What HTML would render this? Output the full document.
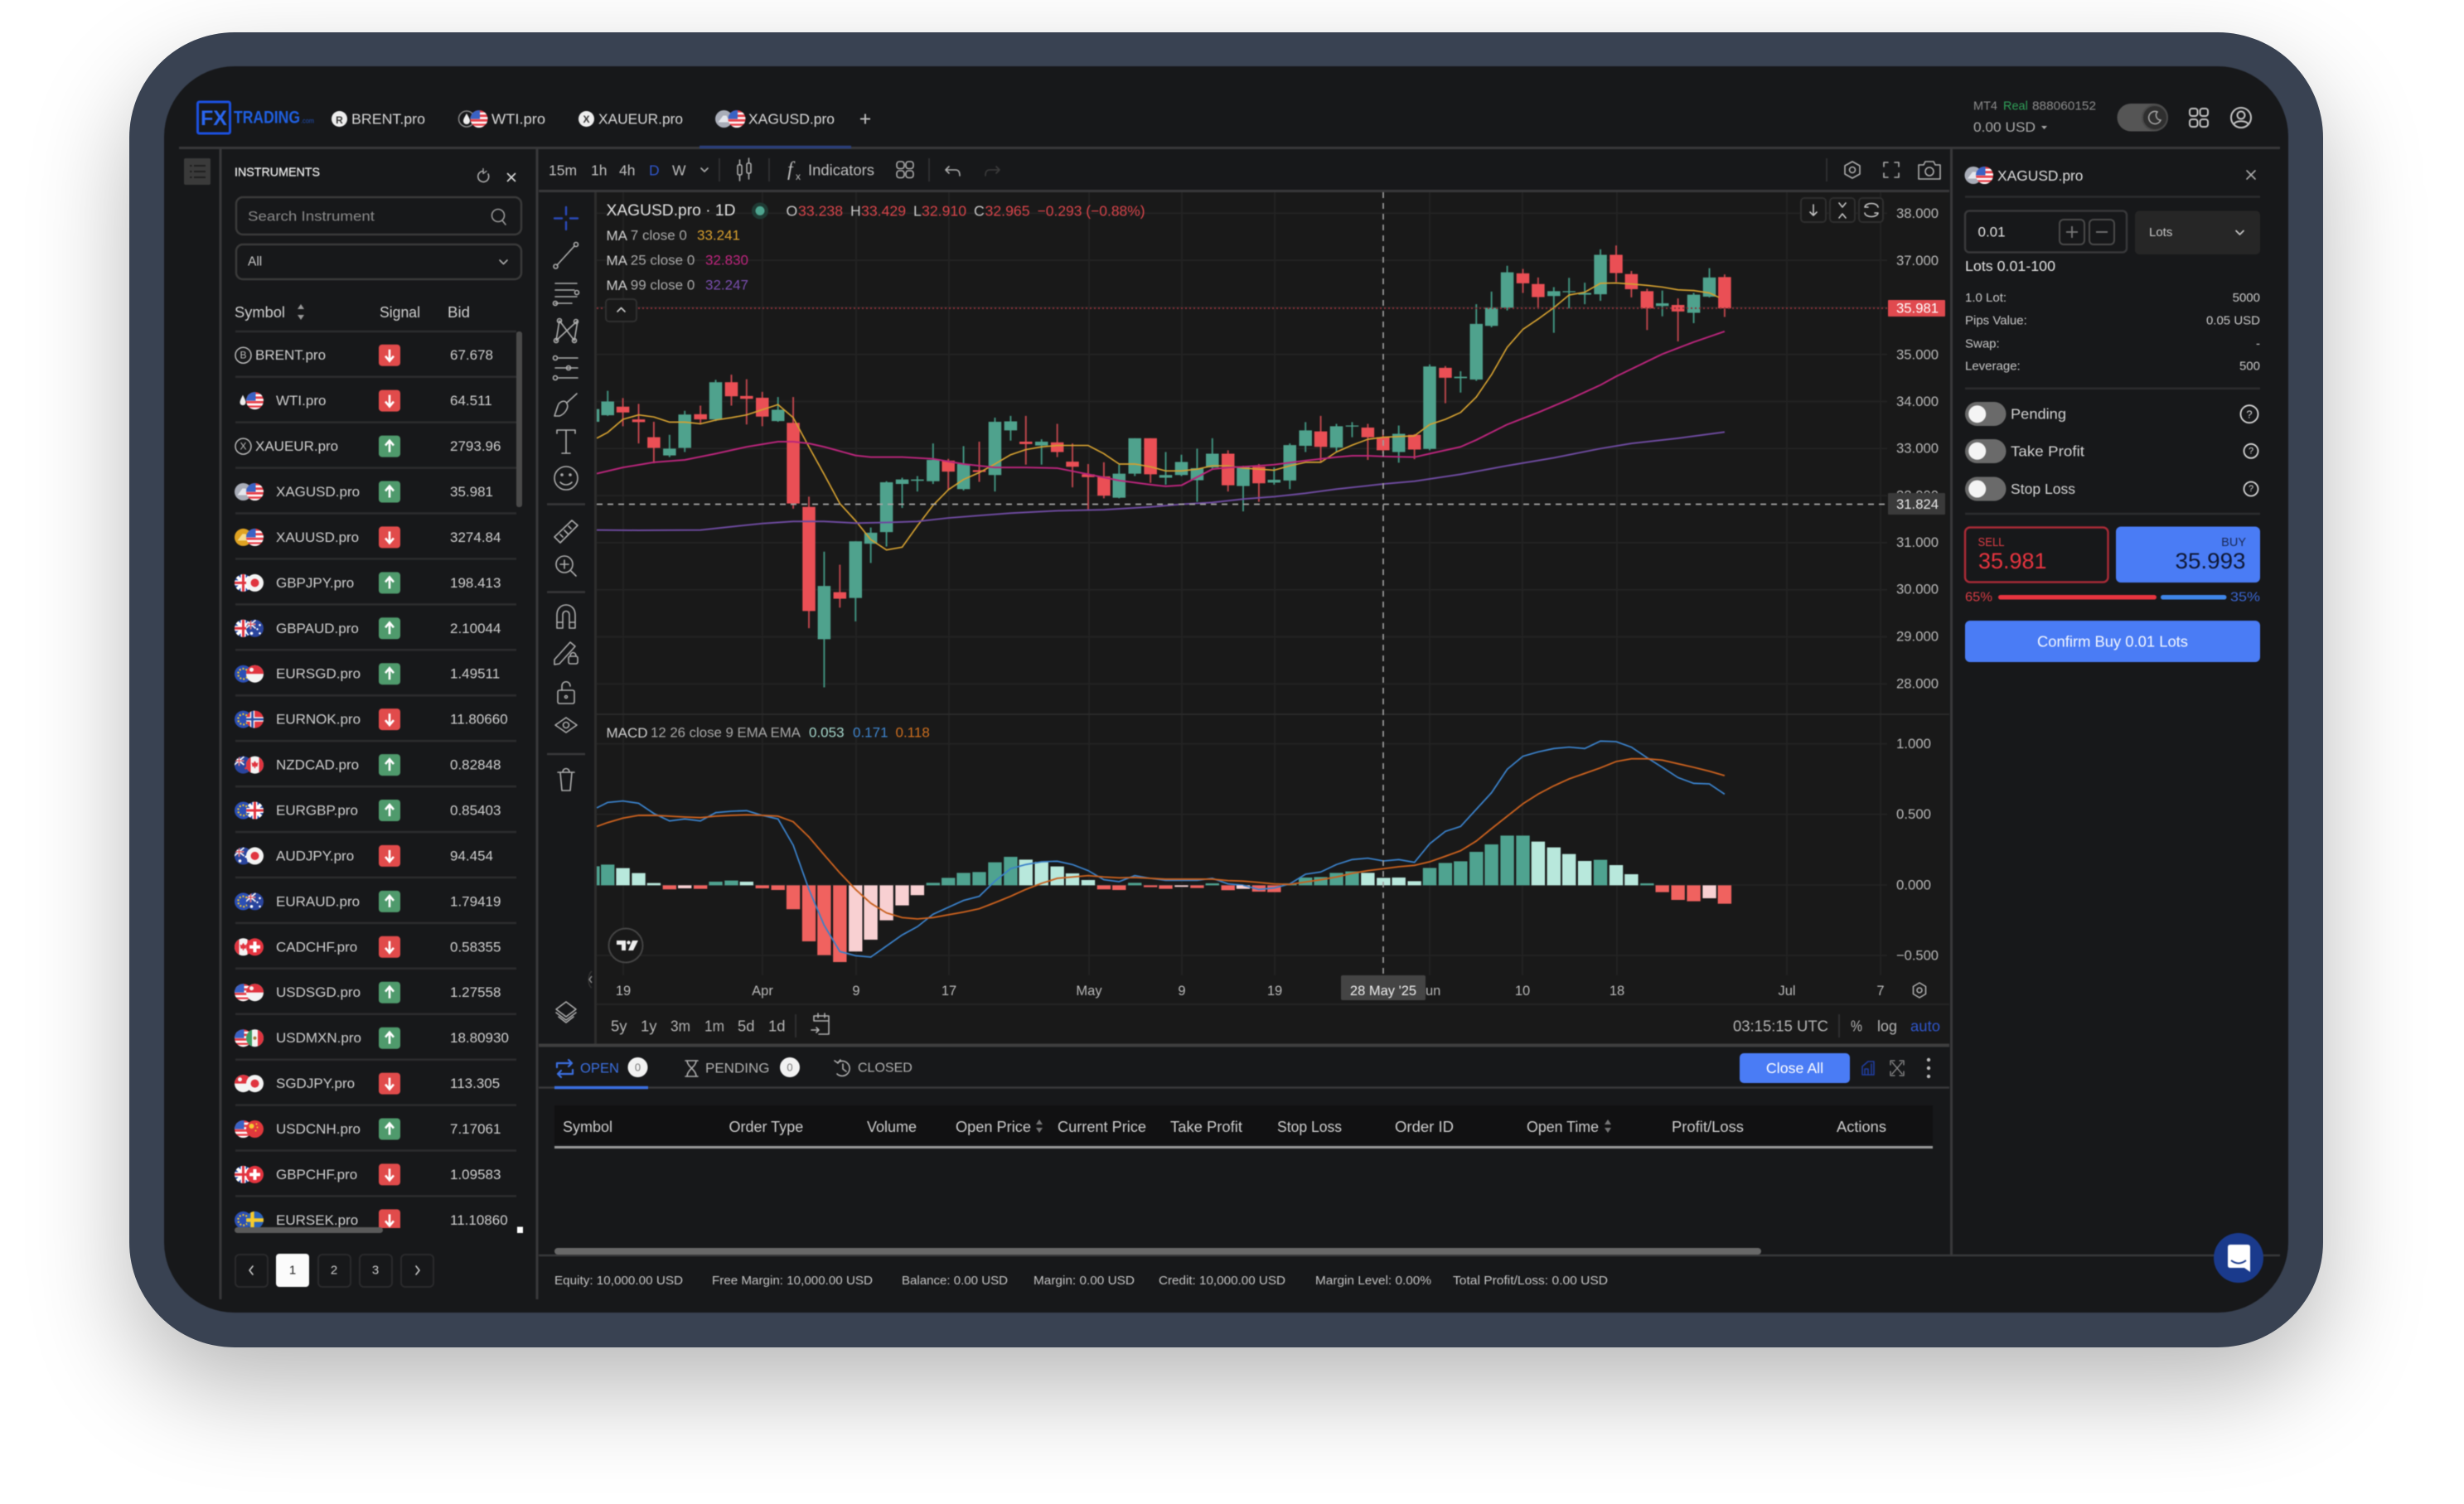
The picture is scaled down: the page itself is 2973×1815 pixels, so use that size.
<!DOCTYPE html>
<html><head><meta charset="utf-8"><title>FX Trading</title>
<style>
html,body{margin:0;padding:0;background:#fff;width:2973px;height:1815px;overflow:hidden}
#f{position:absolute;left:156px;top:39px;width:2647px;height:1587px;border-radius:127px;background:#394252;box-shadow:0 50px 120px rgba(0,0,0,.28)}
svg{position:absolute;left:0;top:0}
text{font-family:"Liberation Sans",sans-serif;dominant-baseline:central;fill:#c8c8c8}
.r{font-size:17px;fill:#cfcfcf}
.t{font-size:17.4px;fill:#d8d8d8}
.tb{font-size:17.5px;fill:#bdbdbd}
.ax{font-size:16.7px;fill:#b8b8b8}
.m{font-size:17px;fill:#a8a8a8}
.h{font-size:18px;fill:#cfcfcf}
.fo{font-size:15.2px;fill:#c4c4c4}
.d{font-size:15px;fill:#c8c8c8}
.tm{font-size:16.5px;fill:#b8b8b8;text-anchor:middle}
.b{font-size:18.5px;fill:#b4b4b4}
.red{fill:#d8444a}
.i{fill:none;stroke:#adadad;stroke-width:1.6;stroke-linecap:round;stroke-linejoin:round}
.dv{stroke:#2c2c2e;stroke-width:2.5;fill:none}
.ln{fill:none;stroke-linejoin:round}
</style></head><body>
<div id="f"></div>
<svg width="2973" height="1815" viewBox="0 0 2973 1815" xmlns="http://www.w3.org/2000/svg">
<defs>
<clipPath id="c"><circle r="10.5"/></clipPath>
<clipPath id="rows"><rect x="270" y="400" width="370" height="1082"/></clipPath>
<clipPath id="ch"><rect x="720" y="232" width="1632" height="950"/></clipPath>
<g id="us" clip-path="url(#c)"><rect x="-11" y="-11" width="22" height="22" fill="#e8404a"/><path d="M-11-6.5H11M-11-1H11M-11 4.5H11M-11 9.5H11" stroke="#fff" stroke-width="2.6"/><rect x="-11" y="-11" width="12" height="11" fill="#3a62c4"/></g>
<g id="gb" clip-path="url(#c)"><rect x="-11" y="-11" width="22" height="22" fill="#2d4fa8"/><path d="M-11-11L11 11M11-11L-11 11" stroke="#fff" stroke-width="4"/><path d="M-11 0H11M0-11V11" stroke="#fff" stroke-width="6"/><path d="M-11 0H11M0-11V11" stroke="#e0343f" stroke-width="3"/></g>
<g id="jp" clip-path="url(#c)"><rect x="-11" y="-11" width="22" height="22" fill="#f4f4f4"/><circle r="5" fill="#e0343f"/></g>
<g id="eu" clip-path="url(#c)"><rect x="-11" y="-11" width="22" height="22" fill="#2b4fb5"/><circle r="6.2" fill="none" stroke="#f2c82e" stroke-width="2.2" stroke-dasharray="2 2"/></g>
<g id="au" clip-path="url(#c)"><rect x="-11" y="-11" width="22" height="22" fill="#2a459e"/><path d="M-11-10L1 0M1-10L-11 0M-5-11V1M-11-5H1" stroke="#f2f2f2" stroke-width="1.8"/><path d="M-11-5H1M-5-11V1" stroke="#e0343f" stroke-width="1"/><circle cx="-4" cy="6" r="1.8" fill="#fff"/><circle cx="6" cy="-4" r="1.3" fill="#fff"/><circle cx="6" cy="6" r="1.3" fill="#fff"/><circle cx="3" cy="1" r="1.2" fill="#fff"/></g>
<g id="sg" clip-path="url(#c)"><rect x="-11" y="-11" width="22" height="22" fill="#f4f4f4"/><rect x="-11" y="-11" width="22" height="11" fill="#e0343f"/><circle cx="-4" cy="-5" r="2.5" fill="#f4f4f4"/></g>
<g id="no" clip-path="url(#c)"><rect x="-11" y="-11" width="22" height="22" fill="#e0343f"/><path d="M-11 0H11M-3-11V11" stroke="#fff" stroke-width="5.4"/><path d="M-11 0H11M-3-11V11" stroke="#2b4fa5" stroke-width="2.6"/></g>
<g id="nz" clip-path="url(#c)"><rect x="-11" y="-11" width="22" height="22" fill="#2a459e"/><path d="M-11-10L1 0M1-10L-11 0M-5-11V1M-11-5H1" stroke="#f2f2f2" stroke-width="1.8"/><path d="M-11-5H1M-5-11V1" stroke="#e0343f" stroke-width="1"/><circle cx="5" cy="-3" r="1.4" fill="#e0343f"/><circle cx="3" cy="4" r="1.4" fill="#e0343f"/><circle cx="7" cy="3" r="1.4" fill="#e0343f"/></g>
<g id="ca" clip-path="url(#c)"><rect x="-11" y="-11" width="22" height="22" fill="#f4f4f4"/><rect x="-11" y="-11" width="6" height="22" fill="#e0343f"/><rect x="5" y="-11" width="6" height="22" fill="#e0343f"/><path d="M0-5L2-2L4-3L3 2H.7V4H-.7V2H-3L-4-3L-2-2Z" fill="#e0343f"/></g>
<g id="ch2" clip-path="url(#c)"><rect x="-11" y="-11" width="22" height="22" fill="#e5343f"/><path d="M-6.5 0H6.5M0-6.5V6.5" stroke="#fff" stroke-width="4"/></g>
<g id="mx" clip-path="url(#c)"><rect x="-11" y="-11" width="22" height="22" fill="#f2f2f2"/><rect x="-11" y="-11" width="7.5" height="22" fill="#3e9b62"/><rect x="3.5" y="-11" width="7.5" height="22" fill="#e0343f"/><circle r="2" fill="#a47c3a"/></g>
<g id="cn" clip-path="url(#c)"><rect x="-11" y="-11" width="22" height="22" fill="#e0383c"/><circle cx="-4" cy="-3.5" r="3" fill="#f4cc30"/><circle cx="2" cy="-6" r="1" fill="#f4cc30"/><circle cx="3" cy="-2" r="1" fill="#f4cc30"/><circle cx="1" cy="2" r="1" fill="#f4cc30"/></g>
<g id="se" clip-path="url(#c)"><rect x="-11" y="-11" width="22" height="22" fill="#2a62b8"/><path d="M-11 0H11M-3-11V11" stroke="#f6cb2c" stroke-width="4.4"/></g>
<g id="si" clip-path="url(#c)"><rect x="-11" y="-11" width="22" height="22" fill="#a9adb8"/><path d="M-7 4L-1-4H3L7 4Z" fill="#e4e6ec"/></g>
<g id="go" clip-path="url(#c)"><rect x="-11" y="-11" width="22" height="22" fill="#e0a322"/><path d="M-7 4L-1-4H3L7 4Z" fill="#f6dd90"/></g>
<g id="dn"><rect x="-13" y="-13" width="26" height="26" rx="4" fill="#e14b4b"/><path d="M0-7V6M-5 1L0 7L5 1" stroke="#fff" stroke-width="2.6" fill="none"/></g>
<g id="up"><rect x="-13" y="-13" width="26" height="26" rx="4" fill="#4f9a6c"/><path d="M0 7V-6M-5-1L0-7L5-1" stroke="#fff" stroke-width="2.6" fill="none"/></g>
</defs>

<g style="filter:blur(.6px)">
<rect x="198" y="80" width="2563" height="1504" rx="85" fill="#17181a"/>

<!-- logo -->
<rect x="238.5" y="123" width="39" height="38" rx="2" fill="none" stroke="#1b50e0" stroke-width="3"/>
<text x="242" y="143" font-size="25" font-weight="700" textLength="32" lengthAdjust="spacingAndGlyphs" style="fill:#2a66ee">FX</text>
<text x="282" y="142" font-size="21" textLength="80" lengthAdjust="spacingAndGlyphs" style="fill:#1f5fe0;font-weight:700">TRADING</text>
<text x="363" y="146" font-size="8" textLength="16" lengthAdjust="spacingAndGlyphs" style="fill:#1f4fb8">.com</text>

<!-- tabs -->
<circle cx="409.5" cy="143.5" r="9.5" fill="#eee"/><text x="409.5" y="145" font-size="12" text-anchor="middle" font-weight="700" style="fill:#333">R</text>
<text x="424" y="143.5" class="t" textLength="89" lengthAdjust="spacingAndGlyphs">BRENT.pro</text>
<circle cx="563" cy="143.5" r="9.5" fill="#17181a" stroke="#888" stroke-width="1.5"/><path d="M563 137C560 142 559 144 559 146A4 4 0 0 0 567 146C567 144 566 142 563 137Z" fill="#eee"/>
<use href="#us" x="578" y="143.5"/>
<text x="593" y="143.5" class="t" textLength="65" lengthAdjust="spacingAndGlyphs">WTI.pro</text>
<circle cx="707.5" cy="143.5" r="9.5" fill="#eee"/><text x="707.5" y="144" font-size="12" text-anchor="middle" font-weight="700" style="fill:#333">X</text>
<text x="722" y="143.5" class="t" textLength="102" lengthAdjust="spacingAndGlyphs">XAUEUR.pro</text>
<use href="#si" x="873.5" y="143.5"/><use href="#us" x="889" y="143.5"/>
<text x="903" y="143.5" class="t" textLength="104" lengthAdjust="spacingAndGlyphs">XAGUSD.pro</text>
<path d="M1038 143.5H1050M1044 137.5V149.5" stroke="#bbb" stroke-width="2"/>

<!-- main dividers -->
<path d="M216 178.5H2751" stroke="#38383a" stroke-width="3"/>
<path d="M844 177.5H1027" stroke="#2a3f7a" stroke-width="3.5"/>
<path d="M266 180V1568M648 180V1568" stroke="#38383a" stroke-width="3"/>
<path d="M2354.5 180V1515" stroke="#38383a" stroke-width="3"/>

<!-- account -->
<text x="2381" y="128.5" font-size="14.5" style="fill:#8c8c8c">MT4</text>
<text x="2417" y="128.5" font-size="14.5" style="fill:#2f9e58">Real</text>
<text x="2452" y="128.5" font-size="14.5" textLength="77" lengthAdjust="spacingAndGlyphs" style="fill:#8c8c8c">888060152</text>
<text x="2381" y="153.7" font-size="17" style="fill:#a8a8a8" textLength="75" lengthAdjust="spacingAndGlyphs">0.00 USD</text>
<path d="M2463 152H2470L2466.5 156Z" fill="#aaa"/>
<rect x="2554.5" y="125" width="61.5" height="33.5" rx="16.7" fill="#555"/>
<circle cx="2600" cy="142" r="15" fill="#2f2f2f" stroke="#4a4a4a" stroke-width="2"/>
<path d="M2603 135A7.5 7.5 0 1 0 2607 145A6 6 0 0 1 2603 135Z" fill="none" stroke="#aaa" stroke-width="1.5"/>
<g class="i" style="stroke:#c4c4c4;stroke-width:2"><rect x="2642" y="131" width="9.5" height="9" rx="3"/><rect x="2654.5" y="131" width="9.5" height="9" rx="3"/><rect x="2642" y="144" width="9.5" height="9" rx="3"/><rect x="2654.5" y="144" width="9.5" height="9" rx="3"/>
<circle cx="2704" cy="142" r="12"/><circle cx="2704" cy="139" r="4.5"/><path d="M2695 150C2698 145 2710 145 2713 150"/></g>

<!-- sidebar strip -->
<rect x="222" y="191" width="32" height="32" rx="2" fill="#3a3a3a"/>
<path d="M234 200H248M234 207H248M234 214H248" stroke="#1e1e1e" stroke-width="2"/><path d="M229 200H231.5M229 207H231.5M229 214H231.5" stroke="#1e1e1e" stroke-width="2"/>

<!-- instruments -->
<text x="283" y="208.5" font-size="14.7" textLength="103" lengthAdjust="spacingAndGlyphs" style="fill:#ececec;stroke:#ececec;stroke-width:.25">INSTRUMENTS</text>
<path d="M589 210A6.5 6.5 0 1 1 583 206.5" class="i"/><path d="M583 203.5V209.5L587 206.5" class="i" style="stroke-width:1.3"/>
<path d="M612.5 209.5L621.5 218.5M621.5 209.5L612.5 218.5" class="i" style="stroke:#ddd"/>
<rect x="285" y="238" width="344" height="45" rx="8" fill="none" stroke="#3a3a3a" stroke-width="2.5"/>
<text x="299" y="261" font-size="17" textLength="153" lengthAdjust="spacingAndGlyphs" style="fill:#8a8a8a">Search Instrument</text>
<circle cx="601" cy="260" r="7.5" class="i" style="stroke:#999;stroke-width:1.6"/><path d="M606 266L610 271" class="i" style="stroke:#999;stroke-width:1.6"/>
<rect x="285" y="295" width="344" height="42" rx="8" fill="none" stroke="#3a3a3a" stroke-width="2.5"/>
<text x="299" y="316" font-size="15.5" style="fill:#c8c8c8">All</text>
<path d="M603 314L607.5 318.5L612 314" class="i"/>
<text x="283" y="377" font-size="18" textLength="61" lengthAdjust="spacingAndGlyphs" style="fill:#d0d0d0">Symbol</text>
<path d="M363 367L367 373H359ZM363 386L367 380H359Z" fill="#999"/>
<text x="458" y="377" font-size="18" textLength="49" lengthAdjust="spacingAndGlyphs" style="fill:#d0d0d0">Signal</text>
<text x="540" y="377" font-size="18" textLength="27" lengthAdjust="spacingAndGlyphs" style="fill:#d0d0d0">Bid</text>
<path d="M284 400H623" class="dv"/>
<rect x="623" y="400" width="7" height="212" rx="3" fill="#4a4a4a"/>

<g clip-path="url(#rows)">
<g transform="translate(0,428.7)"><circle cx="293.5" cy="0" r="9.5" fill="none" stroke="#bbb" stroke-width="1.5"/><text x="293.5" y="0" font-size="12" text-anchor="middle" style="fill:#bbb">B</text><text x="308" class="r">BRENT.pro</text><use href="#dn" x="470"/><text x="543" class="r">67.678</text><path d="M284 26H623" class="dv"/></g>
<g transform="translate(0,483.6)"><path d="M293 -7C290.5 -2 289.5 0 289.5 2A3.5 3.5 0 0 0 296.5 2C296.5 0 295.5 -2 293 -7Z" fill="#eee"/><use href="#us" x="307.5"/><text x="333" class="r">WTI.pro</text><use href="#dn" x="470"/><text x="543" class="r">64.511</text><path d="M284 26H623" class="dv"/></g>
<g transform="translate(0,538.6)"><circle cx="293.5" cy="0" r="9.5" fill="none" stroke="#bbb" stroke-width="1.5"/><text x="293.5" y="0" font-size="12" text-anchor="middle" style="fill:#bbb">X</text><text x="308" class="r">XAUEUR.pro</text><use href="#up" x="470"/><text x="543" class="r">2793.96</text><path d="M284 26H623" class="dv"/></g>
<g transform="translate(0,593.5)"><use href="#si" x="293.5"/><use href="#us" x="307.5"/><text x="333" class="r">XAGUSD.pro</text><use href="#up" x="470"/><text x="543" class="r">35.981</text><path d="M284 26H623" class="dv"/></g>
<g transform="translate(0,648.4)"><use href="#go" x="293.5"/><use href="#us" x="307.5"/><text x="333" class="r">XAUUSD.pro</text><use href="#dn" x="470"/><text x="543" class="r">3274.84</text><path d="M284 26H623" class="dv"/></g>
<g transform="translate(0,703.4)"><use href="#gb" x="293.5"/><use href="#jp" x="307.5"/><text x="333" class="r">GBPJPY.pro</text><use href="#up" x="470"/><text x="543" class="r">198.413</text><path d="M284 26H623" class="dv"/></g>
<g transform="translate(0,758.3)"><use href="#gb" x="293.5"/><use href="#au" x="307.5"/><text x="333" class="r">GBPAUD.pro</text><use href="#up" x="470"/><text x="543" class="r">2.10044</text><path d="M284 26H623" class="dv"/></g>
<g transform="translate(0,813.2)"><use href="#eu" x="293.5"/><use href="#sg" x="307.5"/><text x="333" class="r">EURSGD.pro</text><use href="#up" x="470"/><text x="543" class="r">1.49511</text><path d="M284 26H623" class="dv"/></g>
<g transform="translate(0,868.1)"><use href="#eu" x="293.5"/><use href="#no" x="307.5"/><text x="333" class="r">EURNOK.pro</text><use href="#dn" x="470"/><text x="543" class="r">11.80660</text><path d="M284 26H623" class="dv"/></g>
<g transform="translate(0,923.1)"><use href="#nz" x="293.5"/><use href="#ca" x="307.5"/><text x="333" class="r">NZDCAD.pro</text><use href="#up" x="470"/><text x="543" class="r">0.82848</text><path d="M284 26H623" class="dv"/></g>
<g transform="translate(0,978)"><use href="#eu" x="293.5"/><use href="#gb" x="307.5"/><text x="333" class="r">EURGBP.pro</text><use href="#up" x="470"/><text x="543" class="r">0.85403</text><path d="M284 26H623" class="dv"/></g>
<g transform="translate(0,1032.9)"><use href="#au" x="293.5"/><use href="#jp" x="307.5"/><text x="333" class="r">AUDJPY.pro</text><use href="#dn" x="470"/><text x="543" class="r">94.454</text><path d="M284 26H623" class="dv"/></g>
<g transform="translate(0,1087.9)"><use href="#eu" x="293.5"/><use href="#au" x="307.5"/><text x="333" class="r">EURAUD.pro</text><use href="#up" x="470"/><text x="543" class="r">1.79419</text><path d="M284 26H623" class="dv"/></g>
<g transform="translate(0,1142.8)"><use href="#ca" x="293.5"/><use href="#ch2" x="307.5"/><text x="333" class="r">CADCHF.pro</text><use href="#dn" x="470"/><text x="543" class="r">0.58355</text><path d="M284 26H623" class="dv"/></g>
<g transform="translate(0,1197.7)"><use href="#us" x="293.5"/><use href="#sg" x="307.5"/><text x="333" class="r">USDSGD.pro</text><use href="#up" x="470"/><text x="543" class="r">1.27558</text><path d="M284 26H623" class="dv"/></g>
<g transform="translate(0,1252.7)"><use href="#us" x="293.5"/><use href="#mx" x="307.5"/><text x="333" class="r">USDMXN.pro</text><use href="#up" x="470"/><text x="543" class="r">18.80930</text><path d="M284 26H623" class="dv"/></g>
<g transform="translate(0,1307.6)"><use href="#sg" x="293.5"/><use href="#jp" x="307.5"/><text x="333" class="r">SGDJPY.pro</text><use href="#dn" x="470"/><text x="543" class="r">113.305</text><path d="M284 26H623" class="dv"/></g>
<g transform="translate(0,1362.5)"><use href="#us" x="293.5"/><use href="#cn" x="307.5"/><text x="333" class="r">USDCNH.pro</text><use href="#up" x="470"/><text x="543" class="r">7.17061</text><path d="M284 26H623" class="dv"/></g>
<g transform="translate(0,1417.4)"><use href="#gb" x="293.5"/><use href="#ch2" x="307.5"/><text x="333" class="r">GBPCHF.pro</text><use href="#dn" x="470"/><text x="543" class="r">1.09583</text><path d="M284 26H623" class="dv"/></g>
<g transform="translate(0,1472.4)"><use href="#eu" x="293.5"/><use href="#se" x="307.5"/><text x="333" class="r">EURSEK.pro</text><use href="#dn" x="470"/><text x="543" class="r">11.10860</text></g>
</g>
<rect x="283" y="1481" width="179" height="7" rx="3.5" fill="#5a5a5a"/>
<rect x="624" y="1480.5" width="7" height="7.5" fill="#fff"/>

<!-- pagination -->
<g fill="none" stroke="#2a2a2c" stroke-width="2"><rect x="284" y="1514" width="39" height="39" rx="5"/><rect x="384" y="1514" width="39" height="39" rx="5"/><rect x="434" y="1514" width="39" height="39" rx="5"/><rect x="484" y="1514" width="39" height="39" rx="5"/></g>
<rect x="333" y="1513" width="40" height="40" rx="4" fill="#fbfbfb"/>
<path d="M305 1528L301 1533L305 1538" class="i" style="stroke:#ccc"/><path d="M502 1528L506 1533L502 1538" class="i" style="stroke:#ccc"/>
<text x="353" y="1533" font-size="15" text-anchor="middle" style="fill:#222">1</text>
<text x="403" y="1533" font-size="15" text-anchor="middle" style="fill:#ccc">2</text>
<text x="453" y="1533" font-size="15" text-anchor="middle" style="fill:#ccc">3</text>

<!-- chart toolbar -->
<text x="662" y="205.5" class="tb">15m</text><text x="713" y="205.5" class="tb">1h</text><text x="747" y="205.5" class="tb">4h</text><text x="783" y="205.5" class="tb" style="fill:#2f55c8">D</text><text x="811" y="205.5" class="tb">W</text>
<path d="M846 203L850 207L854 203" class="i"/>
<path d="M868 191V219M928 191V219M1121 191V219M2204 191V219" stroke="#2e2e30" stroke-width="2"/>
<g class="i"><rect x="890" y="199" width="5" height="12" rx="1.5"/><path d="M892.5 193V199M892.5 211V218"/><rect x="901" y="197" width="5" height="12" rx="1.5"/><path d="M903.5 191V197M903.5 209V216"/></g>
<text x="950" y="205" font-size="24" font-style="italic" style="fill:#bdbdbd;font-family:'Liberation Serif',serif">f</text><text x="960" y="213" font-size="12" style="fill:#bdbdbd">x</text>
<text x="975" y="205.5" font-size="18" textLength="80" lengthAdjust="spacingAndGlyphs" style="fill:#bdbdbd">Indicators</text>
<g class="i"><rect x="1082" y="195" width="9" height="8.5" rx="3"/><rect x="1093" y="195" width="9" height="8.5" rx="3"/><rect x="1082" y="206" width="9" height="8.5" rx="3"/><rect x="1093" y="206" width="9" height="8.5" rx="3"/>
<path d="M1145 201L1141 205L1145 209M1141 205H1153C1157 205 1158 208 1158 212"/></g>
<path d="M1202 201L1206 205L1202 209M1206 205H1194C1190 205 1189 208 1189 212" class="i" style="stroke:#3c3c3c"/>
<g class="i"><path d="M2235 195L2244 200V210L2235 215L2226 210V200Z"/><circle cx="2235" cy="205" r="3.5"/>
<path d="M2273 201V196H2278M2286 196H2291V201M2291 209V214H2286M2278 214H2273V209"/>
<path d="M2315 199H2321L2323 195H2333L2335 199H2341V216H2315Z"/><circle cx="2328" cy="207" r="5"/></g>
<path d="M650 230.5H2352" stroke="#38383a" stroke-width="3"/>

<!-- chart bg -->
<rect x="720" y="232" width="1632" height="1028" fill="#191919"/>
<path d="M718.5 232V1262" stroke="#2c2c2c" stroke-width="3"/>
<g stroke="#232323" stroke-width="1.8" fill="none">
<path d="M752 232V1177M920 232V1177M1033 232V1177M1145 232V1177M1314 232V1177M1426 232V1177M1538 232V1177M1725 232V1177M1837 232V1177M1951 232V1177M2156 232V1177M2269 232V1177"/>
<path d="M720 257.3H2277M720 314.1H2277M720 370.9H2277M720 427.7H2277M720 484.5H2277M720 541.3H2277M720 598.1H2277M720 654.9H2277M720 711.7H2277M720 768.5H2277M720 825.3H2277"/>
<path d="M720 897.7H2277M720 982.7H2277M720 1068H2277M720 1153H2277"/>
</g>
<path d="M720 862H2352" stroke="#2a2a2a" stroke-width="2"/>
<path d="M720 1212H2352" stroke="#232323" stroke-width="2.5"/>
<path d="M650 1261.5H2352" stroke="#3e3e3e" stroke-width="4"/>

<!-- candles -->
<g clip-path="url(#ch)">
<g transform="translate(650,220) scale(.574,.4146)" fill="none">
<path stroke="#3f8f7c" stroke-width="3.5" d="M145 607V680M275 735V800M307 665V785M372 575V695M503 625V697M600 1075V1470M666 1045V1278M698 1005V1108M731 870V1060M764 860V948M796 855V900M829 760V878M893 768V897M959 685V900M992 680V752M1057 748V822M1220 822V920M1253 745V855M1318 785V880M1351 793V855M1384 775V930M1416 745V835"/>
<path stroke="#b8444a" stroke-width="3.5" d="M177 628V710M210 645V760M242 697V818M340 650V705M405 560V650M437 573V705M470 610V710M535 625V950M568 915V1298M633 1113V1238M861 805V895M926 755V872M1024 680V822M1090 703V800M1122 760V888M1155 820V955M1188 815V920M1286 745V875M1449 780V900"/>
<path stroke="#4fa28d" stroke-width="27" d="M114 660V697M145 638V678M275 775V795M307 676V773M372 582V690M503 662V695M600 1175V1330M666 1045V1210M698 1020V1052M731 873V1018M764 865V878M796 865V869M829 808V870M893 820V893M959 697V852M992 696V722M1057 755V766M1220 848V918M1253 745V848M1318 852V860M1351 814V852M1384 832V867M1416 790V830"/>
<path stroke="#ea4f55" stroke-width="27" d="M177 653V670M210 690V698M242 742V773M340 675V690M405 582V623M437 622V630M470 627V682M535 700V935M568 945V1248M633 1193V1212M861 810V842M926 838V843M1024 755V762M1090 757V785M1122 813V828M1155 850V858M1188 856V912M1286 745V850M1449 790V882"/>
</g>
<g transform="translate(1500,220) scale(.574,.4146)" fill="none">
<path stroke="#3f8f7c" stroke-width="3.5" d="M0 825V958M65 830V880M98 760V893M131 698V785M196 703V785M229 698V742M327 708V816M392 530V780M457 550V612M490 355V578M522 318V422M555 243V373M653 305V438M685 278V367M718 292V355M751 195V345M881 315V390M947 322V410M980 250V335"/>
<path stroke="#b8444a" stroke-width="3.5" d="M33 820V930M163 680V815M262 703V808M294 720V790M360 733V806M425 535V643M588 252V322M620 277V365M784 184V290M816 258V335M849 310V430M914 338V463M1012 268V392"/>
<path stroke="#4fa28d" stroke-width="27" d="M0 826V884M65 866V874M98 765V868M131 722V767M196 710V772M229 708V711M327 732V785M392 536V776M457 566V570M490 412V574M522 365V418M555 262V365M653 317V331M685 317V320M718 322V327M751 211V326M881 352V360M947 327V380M980 277V333"/>
<path stroke="#ea4f55" stroke-width="27" d="M33 828V876M163 725V770M262 714V742M294 742V780M360 735V778M425 540V569M588 265V294M620 296V334M784 211V264M816 267V311M849 317V367M914 357V376M1012 276V367"/>
</g>
<!-- MAs -->
<g transform="translate(650,220) scale(.574,.4146)" class="ln">
<polyline vector-effect="non-scaling-stroke" stroke="#d4a030" stroke-width="1.7" fill="none" points="122,745 145,728 177,690 210,677 242,683 275,698 307,698 340,703 372,692 405,685 437,677 470,662 503,647 535,685 568,770 600,850 633,935 666,985 698,1040 731,1070 764,1062 796,1000 829,940 861,895 893,865 926,845 959,820 992,793 1024,778 1057,770 1090,766 1122,766 1155,766 1188,790 1220,820 1253,820 1286,828 1318,840 1351,840 1384,835 1416,825 1449,825 1481,832"/>
<polyline vector-effect="non-scaling-stroke" stroke="#b8257a" stroke-width="2" fill="none" points="122,848 177,830 242,815 307,808 372,790 437,770 503,755 535,755 568,760 600,770 666,795 698,800 764,800 829,805 893,820 959,830 1024,830 1090,832 1155,850 1220,868 1286,880 1318,885 1351,882 1416,835 1449,830 1481,828"/>
<polyline vector-effect="non-scaling-stroke" stroke="#6d4a9e" stroke-width="2" fill="none" points="122,1012 210,1013 340,1012 470,993 535,987 600,987 666,992 731,990 796,987 861,977 926,970 992,963 1090,956 1188,953 1286,945 1351,937 1416,932 1481,922"/>
</g>
<g transform="translate(1500,220) scale(.574,.4146)" class="ln">
<polyline vector-effect="non-scaling-stroke" stroke="#d4a030" stroke-width="1.7" fill="none" points="0,832 33,835 65,838 98,825 131,815 163,815 196,785 229,765 262,748 295,742 327,740 360,738 392,705 425,690 457,670 490,625 522,560 555,480 588,428 620,398 653,365 685,328 718,320 751,294 784,293 816,296 849,300 881,305 914,313 947,315 980,322 1000,335"/>
<polyline vector-effect="non-scaling-stroke" stroke="#b8257a" stroke-width="2" fill="none" points="0,828 65,822 131,810 196,800 229,796 262,796 295,798 360,800 392,790 457,770 490,750 555,705 620,670 685,632 751,590 784,565 881,500 947,465 1012,434"/>
<polyline vector-effect="non-scaling-stroke" stroke="#6d4a9e" stroke-width="2" fill="none" points="0,922 65,915 131,905 196,893 295,878 360,870 457,850 555,825 653,802 751,775 816,760 914,745 1012,727"/>
</g>
</g>

<!-- MACD -->
<g clip-path="url(#ch)">
<g transform="translate(650,860) scale(.574,.3333)" fill="none">
<path stroke="#4fa390" stroke-width="28.5" d="M114 625V556M145 625V550M372 625V612M405 625V608M829 625V616M861 625V598M893 625V580M926 625V577M959 625V542M992 625V522M1253 625V616M1416 625V618"/>
<path stroke="#b8e8dc" stroke-width="28.5" d="M177 625V563M210 625V581M242 625V617M437 625V612M1024 625V532M1057 625V540M1090 625V557M1122 625V582M1155 625V606"/>
<path stroke="#f0625f" stroke-width="28.5" d="M275 625V640M340 625V638M470 625V636M503 625V642M535 625V712M568 625V828M600 625V878M633 625V903M1188 625V640M1220 625V642M1286 625V632M1318 625V638M1384 625V635M1449 625V643"/>
<path stroke="#f8d0d2" stroke-width="28.5" d="M307 625V636M666 625V865M698 625V822M731 625V752M764 625V698M796 625V661M1351 625V631"/>
<polyline vector-effect="non-scaling-stroke" stroke="#3a80c8" stroke-width="1.8" points="122,345 145,325 177,320 210,328 242,365 275,392 307,385 340,392 372,362 405,357 437,355 470,372 503,385 535,480 568,640 600,770 633,865 666,880 698,885 731,845 764,805 796,775 829,730 861,705 893,680 926,665 959,610 992,565 1024,550 1057,540 1090,538 1122,550 1155,572 1188,605 1220,612 1253,590 1286,600 1318,607 1351,607 1384,607 1416,600 1449,620 1481,625"/>
<polyline vector-effect="non-scaling-stroke" stroke="#c8601e" stroke-width="1.9" points="122,412 145,398 177,382 210,372 242,372 275,375 307,378 340,380 372,375 405,372 437,370 470,372 503,375 535,395 568,450 600,515 633,580 666,640 698,690 731,725 764,742 796,747 829,742 861,732 893,722 926,710 959,688 992,665 1024,640 1057,618 1090,600 1122,595 1155,590 1188,595 1220,598 1253,597 1286,600 1318,603 1351,603 1384,603 1416,603 1449,608 1481,610"/>
</g>
<g transform="translate(1500,860) scale(.574,.3333)" fill="none">
<path stroke="#4fa390" stroke-width="28.5" d="M98 625V618M131 625V597M163 625V595M196 625V580M229 625V575M392 625V562M425 625V544M457 625V538M490 625V504M522 625V477M555 625V445M588 625V445M751 625V533M849 625V618"/>
<path stroke="#b8e8dc" stroke-width="28.5" d="M262 625V580M295 625V598M327 625V597M360 625V610M620 625V467M653 625V488M685 625V512M718 625V537M784 625V552M816 625V585"/>
<path stroke="#f0625f" stroke-width="28.5" d="M33 625V648M65 625V650M881 625V650M914 625V678M947 625V683M1012 625V692"/>
<path stroke="#f8d0d2" stroke-width="28.5" d="M0 625V638M980 625V672"/>
<polyline vector-effect="non-scaling-stroke" stroke="#3a80c8" stroke-width="1.8" points="0,625 33,640 65,635 98,620 131,585 163,577 196,550 229,532 262,527 295,537 327,532 360,542 392,475 425,430 457,412 490,350 522,290 555,205 588,158 620,142 653,130 685,125 718,130 751,103 784,105 816,125 849,163 881,198 914,235 947,256 980,258 1012,295"/>
<polyline vector-effect="non-scaling-stroke" stroke="#c8601e" stroke-width="1.9" points="0,610 33,615 65,620 98,622 131,613 163,605 196,595 229,582 262,572 295,565 327,558 360,553 392,540 425,520 457,500 490,465 522,420 555,375 588,330 620,295 653,265 685,240 718,220 751,200 784,177 816,167 849,167 881,172 914,185 947,198 980,212 1012,228"/>
</g>
</g>

<!-- price line + crosshair -->
<path d="M720 372H2278" stroke="#8a3038" stroke-width="2" stroke-dasharray="2 3"/>
<path d="M720 608.5H2278" stroke="#a8a8a8" stroke-width="1.7" stroke-dasharray="7 6"/>
<path d="M1669 232V1176" stroke="#a0a0a0" stroke-width="1.7" stroke-dasharray="7 6"/>

<!-- chart legend -->
<text x="731.5" y="254.4" font-size="19.2" style="fill:#e2e2e2" textLength="156" lengthAdjust="spacingAndGlyphs">XAGUSD.pro · 1D</text>
<circle cx="917" cy="254.4" r="10" fill="#1f3a33"/><circle cx="917" cy="254.4" r="5.5" fill="#4ea58f"/>
<text x="948.5" y="254.4" font-size="17.7">O</text><text x="963" y="254.4" font-size="17.7" class="red">33.238</text><text x="1026" y="254.4" font-size="17.7">H</text><text x="1039" y="254.4" font-size="17.7" class="red">33.429</text><text x="1102" y="254.4" font-size="17.7">L</text><text x="1112" y="254.4" font-size="17.7" class="red">32.910</text><text x="1175" y="254.4" font-size="17.7">C</text><text x="1188.5" y="254.4" font-size="17.7" class="red">32.965</text><text x="1251.6" y="254.4" font-size="17.7" class="red" textLength="130" lengthAdjust="spacingAndGlyphs">−0.293 (−0.88%)</text>
<text x="731.5" y="284" class="m"><tspan style="fill:#cfcfcf">MA</tspan> 7 close 0</text><text x="841" y="284" class="m" style="fill:#d9a02e">33.241</text>
<text x="731.5" y="314" class="m"><tspan style="fill:#cfcfcf">MA</tspan> 25 close 0</text><text x="851" y="314" class="m" style="fill:#c0257f">32.830</text>
<text x="731.5" y="344" class="m"><tspan style="fill:#cfcfcf">MA</tspan> 99 close 0</text><text x="851" y="344" class="m" style="fill:#7a4fb0">32.247</text>
<rect x="731" y="361" width="37" height="27" rx="4" fill="#191919" stroke="#303030" stroke-width="2"/><path d="M745 376L749.5 371.5L754 376" class="i" style="stroke:#ccc"/>
<g fill="#191919" stroke="#2e2e2e" stroke-width="2"><rect x="2173" y="239" width="30" height="29" rx="4"/><rect x="2208" y="239" width="30" height="29" rx="4"/><rect x="2243" y="239" width="29" height="29" rx="4"/></g>
<g class="i" style="stroke:#c4c4c4"><path d="M2188 247V260M2184 256L2188 260L2192 256"/><path d="M2219 245L2223 250L2227 245M2219 263L2223 258L2227 263"/><path d="M2250 250C2251 244 2265 244 2266 250M2250 257C2251 263 2265 263 2266 257M2250 250H2254M2262 257H2266"/></g>

<!-- price axis -->
<text x="2288" y="257.3" class="ax">38.000</text><text x="2288" y="314.5" class="ax">37.000</text><text x="2288" y="428" class="ax">35.000</text><text x="2288" y="484.5" class="ax">34.000</text><text x="2288" y="541" class="ax">33.000</text><text x="2288" y="598" class="ax">32.000</text><text x="2288" y="654.5" class="ax">31.000</text><text x="2288" y="711" class="ax">30.000</text><text x="2288" y="768" class="ax">29.000</text><text x="2288" y="825" class="ax">28.000</text>
<rect x="2278" y="362" width="69" height="20" rx="1" fill="#e04a4f"/><text x="2288" y="372" class="ax" style="fill:#fff">35.981</text>
<rect x="2278" y="595" width="69" height="26" rx="1" fill="#3a3a3a"/><text x="2288" y="608.5" class="ax" style="fill:#e8e8e8">31.824</text>
<text x="2288" y="897.7" class="ax" textLength="42" lengthAdjust="spacingAndGlyphs">1.000</text><text x="2288" y="982.7" class="ax" textLength="42" lengthAdjust="spacingAndGlyphs">0.500</text><text x="2288" y="1068" class="ax" textLength="42" lengthAdjust="spacingAndGlyphs">0.000</text><text x="2288" y="1153" class="ax" textLength="51" lengthAdjust="spacingAndGlyphs">−0.500</text>

<text x="731.5" y="884" class="m"><tspan style="fill:#cfcfcf">MACD</tspan></text><text x="785" y="884" class="m" textLength="181" lengthAdjust="spacingAndGlyphs">12 26 close 9 EMA EMA</text>
<text x="976" y="884" class="m" style="fill:#a6d8cc">0.053</text><text x="1029" y="884" class="m" style="fill:#3f86d0">0.171</text><text x="1080.5" y="884" class="m" style="fill:#d0701f">0.118</text>

<!-- TV logo -->
<circle cx="755" cy="1141" r="20.5" fill="#191919" stroke="#444" stroke-width="2"/>
<path d="M744 1135H755V1147H750V1140H744ZM763 1135H770L764 1147H758Z" fill="#eee"/><circle cx="758.5" cy="1137.5" r="2.2" fill="#eee"/>
<path d="M714 1172C709 1176 709 1190 714 1192" fill="none" stroke="#333" stroke-width="1.5"/><path d="M714 1178L711 1182L714 1186" fill="none" stroke="#888" stroke-width="1.5"/>

<!-- time axis -->
<text x="752" y="1196" class="tm">19</text><text x="920" y="1196" class="tm">Apr</text><text x="1033" y="1196" class="tm">9</text><text x="1145" y="1196" class="tm">17</text><text x="1314" y="1196" class="tm">May</text><text x="1426" y="1196" class="tm">9</text><text x="1538" y="1196" class="tm">19</text><text x="1725" y="1196" class="tm">Jun</text><text x="1837" y="1196" class="tm">10</text><text x="1951" y="1196" class="tm">18</text><text x="2156" y="1196" class="tm">Jul</text><text x="2269" y="1196" class="tm">7</text>
<rect x="1618" y="1177" width="102" height="30" rx="2" fill="#444"/><text x="1669" y="1196" class="tm" style="fill:#eee">28 May '25</text>
<path d="M2316 1186L2323.5 1190.5V1199.5L2316 1204L2308.5 1199.5V1190.5Z" class="i"/><circle cx="2316" cy="1195" r="3" class="i"/>

<!-- range bar -->
<text x="737" y="1238" class="b">5y</text><text x="773" y="1238" class="b">1y</text><text x="809" y="1238" class="b" textLength="24" lengthAdjust="spacingAndGlyphs">3m</text><text x="850" y="1238" class="b" textLength="24" lengthAdjust="spacingAndGlyphs">1m</text><text x="890" y="1238" class="b">5d</text><text x="927" y="1238" class="b">1d</text>
<path d="M960 1224V1252M2219 1224V1252" stroke="#2e2e30" stroke-width="2"/>
<path d="M982 1232V1226H1000V1248H988M982 1232H1000M987 1223V1228M995 1223V1228M979 1243H988M985 1240L988 1243L985 1246" class="i"/>
<text x="2091" y="1238" class="b" textLength="115" lengthAdjust="spacingAndGlyphs">03:15:15 UTC</text>
<text x="2233" y="1238" class="b" textLength="14" lengthAdjust="spacingAndGlyphs">%</text><text x="2265" y="1238" class="b" textLength="24" lengthAdjust="spacingAndGlyphs">log</text><text x="2305" y="1238" class="b" textLength="36" lengthAdjust="spacingAndGlyphs" style="fill:#2f55c8">auto</text>

<!-- tool column -->
<g class="i">
<path d="M683 250V259M683 268V277M669 263.5H678M688 263.5H697" style="stroke:#2a4ab8;stroke-width:2.4"/>
<path d="M672 320L693 297"/><circle cx="670.5" cy="321.5" r="2.5"/><circle cx="695" cy="295" r="2.5"/>
<path d="M670 342H696M670 350H693M670 358H696M670 366H690"/><circle cx="696" cy="353" r="2.5"/><circle cx="670" cy="366" r="2.5"/>
<path d="M671 411L675 387L693 411L697 387L671 411"/><circle cx="671" cy="411" r="2.5"/><circle cx="675" cy="387" r="2.5"/><circle cx="693" cy="411" r="2.5"/><circle cx="695" cy="388" r="2.5"/>
<path d="M674 432H697M670 444H697M674 456H697"/><circle cx="670" cy="432" r="2.5"/><circle cx="670" cy="456" r="2.5"/><circle cx="686" cy="444" r="2.5"/>
<path d="M669 502L673 490C675 484 682 482 684 487C687 492 681 500 675 502ZM684 486L696 475"/>
<path d="M672 523V519H694V523M683 519V547M678 547H688"/>
<circle cx="683" cy="577" r="14"/><circle cx="678" cy="573" r="1"/><circle cx="688" cy="573" r="1"/><path d="M676 582C680 586 686 586 690 582"/>
<path d="M669 648L690 628L697 634L676 655ZM676 645L679 648M681 640L685 644M686 635L689 638"/>
<circle cx="681" cy="681" r="10"/><path d="M681 676V686M676 681H686M689 689L695 695"/>
<path d="M672 758V742C672 726 694 726 694 742V758H687V742C687 736 679 736 679 742V758ZM672 751H679M687 751H694"/>
<path d="M669 796L688 775L694 780L675 801L669 802Z"/><rect x="686" y="792" width="11" height="9" rx="2"/><path d="M688 792C688 786 695 786 695 792"/>
<rect x="673" y="833" width="20" height="16" rx="2"/><path d="M678 833V828C678 821 688 821 688 828"/><circle cx="683" cy="841" r="1.5"/>
<path d="M670 875L683 866L696 875L683 884Z"/><circle cx="683" cy="875" r="3.5"/>
<path d="M673 932H693M676 932L678 954H688L690 932M679 932C679 926 687 926 687 932"/>
<path d="M683 1209L695 1218L683 1227L671 1218ZM671 1222L683 1231L695 1222M674 1227L683 1234L692 1227"/>
</g>
<path d="M660 608.5H706M660 714.5H706M660 910H706" stroke="#38383a" stroke-width="2.5"/>

<!-- positions tabs -->
<g class="i" style="stroke:#3b6fe0;stroke-width:2.2"><path d="M672 1288V1283H690M686 1279L690 1283L686 1287M691 1291V1296H673M677 1292L673 1296L677 1300"/></g>
<text x="700" y="1289" font-size="16.6" style="fill:#3b6fe0">OPEN</text>
<circle cx="769.5" cy="1288" r="12" fill="#f2f2f2"/><text x="769.5" y="1288" font-size="13" text-anchor="middle" style="fill:#777">0</text>
<path d="M827 1280H842M827 1299H842M829 1280C829 1287 840 1291 840 1299M840 1280C840 1287 829 1291 829 1299" class="i"/>
<text x="851" y="1289" font-size="17" style="fill:#b0b0b0">PENDING</text>
<circle cx="953" cy="1288" r="12" fill="#f2f2f2"/><text x="953" y="1288" font-size="13" text-anchor="middle" style="fill:#777">0</text>
<path d="M1011 1282A9 9 0 1 1 1010 1296M1007 1280L1011 1283L1014 1279M1017 1284V1290L1021 1293" class="i"/>
<text x="1035" y="1289" font-size="16" style="fill:#b0b0b0">CLOSED</text>
<path d="M650 1312.5H2352" stroke="#38383a" stroke-width="2.5"/>
<path d="M669 1312.5H782" stroke="#3b6fe0" stroke-width="3.5"/>
<rect x="2099" y="1271" width="133" height="36" rx="5" fill="#4a7cf5"/>
<text x="2165.5" y="1289" font-size="17.8" text-anchor="middle" style="fill:#fff">Close All</text>
<path d="M2247 1297V1287L2254 1281H2261V1297ZM2250 1297V1290H2254V1297M2258 1284V1297" class="i" style="stroke:#1f3c9e"/>
<path d="M2281 1285V1280H2286M2292 1280H2297V1285M2297 1293V1298H2292M2286 1298H2281V1293M2283 1282L2295 1296M2295 1282L2283 1296" class="i" style="stroke:#8f8f8f;stroke-width:1.3"/>
<circle cx="2327" cy="1279" r="2.2" fill="#bbb"/><circle cx="2327" cy="1289" r="2.2" fill="#bbb"/><circle cx="2327" cy="1299" r="2.2" fill="#bbb"/>

<!-- table header -->
<rect x="669" y="1334" width="1663" height="47" fill="#111112"/>
<rect x="669" y="1383" width="1663" height="3" fill="#9a9a9a"/>
<text x="679" y="1360" class="h">Symbol</text><text x="879.5" y="1360" class="h">Order Type</text><text x="1046" y="1360" class="h">Volume</text><text x="1153" y="1360" class="h" textLength="91" lengthAdjust="spacingAndGlyphs">Open Price</text><text x="1276" y="1360" class="h" textLength="107" lengthAdjust="spacingAndGlyphs">Current Price</text><text x="1412" y="1360" class="h" textLength="87" lengthAdjust="spacingAndGlyphs">Take Profit</text><text x="1541" y="1360" class="h" textLength="78" lengthAdjust="spacingAndGlyphs">Stop Loss</text><text x="1683" y="1360" class="h" textLength="71" lengthAdjust="spacingAndGlyphs">Order ID</text><text x="1842" y="1360" class="h" textLength="87" lengthAdjust="spacingAndGlyphs">Open Time</text><text x="2017" y="1360" class="h" textLength="87" lengthAdjust="spacingAndGlyphs">Profit/Loss</text><text x="2216" y="1360" class="h" textLength="60" lengthAdjust="spacingAndGlyphs">Actions</text>
<path d="M1254 1351L1258 1357H1250ZM1254 1367L1258 1361H1250ZM1940 1351L1944 1357H1936ZM1940 1367L1944 1361H1936Z" fill="#777"/>

<!-- footer -->
<path d="M650 1515H2751" stroke="#38383a" stroke-width="2.5"/>
<rect x="669" y="1506" width="1456" height="8" rx="4" fill="#686868"/>
<text x="669" y="1545.7" class="fo" textLength="155" lengthAdjust="spacingAndGlyphs">Equity: 10,000.00 USD</text><text x="859" y="1545.7" class="fo" textLength="194" lengthAdjust="spacingAndGlyphs">Free Margin: 10,000.00 USD</text><text x="1088" y="1545.7" class="fo" textLength="128" lengthAdjust="spacingAndGlyphs">Balance: 0.00 USD</text><text x="1247" y="1545.7" class="fo" textLength="122" lengthAdjust="spacingAndGlyphs">Margin: 0.00 USD</text><text x="1398" y="1545.7" class="fo" textLength="153" lengthAdjust="spacingAndGlyphs">Credit: 10,000.00 USD</text><text x="1587" y="1545.7" class="fo" textLength="140" lengthAdjust="spacingAndGlyphs">Margin Level: 0.00%</text><text x="1753" y="1545.7" class="fo" textLength="187" lengthAdjust="spacingAndGlyphs">Total Profit/Loss: 0.00 USD</text>

<!-- chat -->
<circle cx="2701" cy="1518" r="30" fill="#1a3a8c"/>
<path d="M2691 1502H2712Q2715 1502 2715 1505V1535L2708 1530H2691Q2688 1530 2688 1527V1505Q2688 1502 2691 1502Z" fill="#fff"/>
<path d="M2692 1521Q2701 1528 2710 1521" fill="none" stroke="#1a3a8c" stroke-width="2"/>

<!-- order panel -->
<use href="#si" x="2381" y="211.5"/><use href="#us" x="2394.5" y="211.5"/>
<text x="2410" y="212" font-size="17.4" textLength="103.5" lengthAdjust="spacingAndGlyphs" style="fill:#dcdcdc">XAGUSD.pro</text>
<path d="M2711 206L2721 216M2721 206L2711 216" class="i"/>
<path d="M2371 237.5H2727" class="dv"/>
<rect x="2371" y="254.5" width="195" height="50" rx="5" fill="none" stroke="#38383a" stroke-width="2.5"/>
<text x="2386.5" y="280" font-size="17" style="fill:#e4e4e4">0.01</text>
<g fill="none" stroke="#4a4a4a" stroke-width="2"><rect x="2485" y="265" width="30" height="30" rx="5"/><rect x="2521" y="265" width="30" height="30" rx="5"/></g>
<path d="M2493 280H2507M2500 273V287M2529 280H2543" stroke="#777" stroke-width="1.8"/>
<rect x="2576" y="254.5" width="151" height="52.5" rx="5" fill="#262626"/>
<text x="2593" y="280.5" font-size="15" style="fill:#c8c8c8">Lots</text>
<path d="M2698 278.5L2702.5 283L2707 278.5" class="i" style="stroke:#ccc"/>
<text x="2371" y="321" font-size="17.5" textLength="109" lengthAdjust="spacingAndGlyphs" style="fill:#e4e4e4">Lots 0.01-100</text>
<text x="2371" y="359.7" class="d">1.0 Lot:</text><text x="2727" y="359.7" class="d" text-anchor="end">5000</text>
<text x="2371" y="386.8" class="d">Pips Value:</text><text x="2727" y="386.8" class="d" text-anchor="end">0.05 USD</text>
<text x="2371" y="415" class="d">Swap:</text><text x="2727" y="415" class="d" text-anchor="end">-</text>
<text x="2371" y="442" class="d">Leverage:</text><text x="2727" y="442" class="d" text-anchor="end">500</text>
<path d="M2371 468.7H2727" class="dv"/>
<g fill="#6a6a6a"><rect x="2371" y="485" width="49.5" height="29" rx="14.5"/><rect x="2371" y="530" width="49.5" height="29" rx="14.5"/><rect x="2371" y="575.5" width="49.5" height="29" rx="14.5"/></g>
<g fill="#f4f4f4"><circle cx="2385.7" cy="499.7" r="10.5"/><circle cx="2385.7" cy="544.3" r="10.5"/><circle cx="2385.7" cy="590" r="10.5"/></g>
<text x="2426" y="499.7" font-size="17.5" textLength="67" lengthAdjust="spacingAndGlyphs" style="fill:#d4d4d4">Pending</text>
<text x="2426" y="544.3" font-size="17.5" textLength="89" lengthAdjust="spacingAndGlyphs" style="fill:#d4d4d4">Take Profit</text>
<text x="2426" y="590" font-size="17.5" textLength="78" lengthAdjust="spacingAndGlyphs" style="fill:#d4d4d4">Stop Loss</text>
<g fill="none" stroke="#d8d8d8" stroke-width="1.8"><circle cx="2714" cy="499.7" r="10.5"/><circle cx="2716" cy="544.3" r="8.5"/><circle cx="2716" cy="590" r="8.5"/></g>
<text x="2714" y="500" font-size="13" text-anchor="middle" style="fill:#d8d8d8">?</text><text x="2716" y="544.5" font-size="11" text-anchor="middle" style="fill:#d8d8d8">?</text><text x="2716" y="590.2" font-size="11" text-anchor="middle" style="fill:#d8d8d8">?</text>
<path d="M2371 620H2727" class="dv"/>
<rect x="2371" y="636.5" width="172.5" height="66" rx="6" fill="none" stroke="#a82a36" stroke-width="2.5"/>
<text x="2386.5" y="655" font-size="14.5" textLength="32" lengthAdjust="spacingAndGlyphs" style="fill:#d83c44">SELL</text>
<text x="2387" y="677" font-size="27" textLength="82.5" lengthAdjust="spacingAndGlyphs" style="fill:#e8343f">35.981</text>
<rect x="2553" y="635.5" width="174" height="67.5" rx="6" fill="#4a7cf5"/>
<text x="2710" y="655" font-size="14.5" text-anchor="end" style="fill:#1a2a58">BUY</text>
<text x="2709.5" y="677" font-size="27" text-anchor="end" textLength="85" lengthAdjust="spacingAndGlyphs" style="fill:#0e1734">35.993</text>
<text x="2371" y="721" font-size="15.5" textLength="33" lengthAdjust="spacingAndGlyphs" style="fill:#d83c44">65%</text>
<rect x="2411" y="718" width="191" height="5.5" rx="2.7" fill="#e8343f"/>
<rect x="2607" y="718" width="79.5" height="5.5" rx="2.7" fill="#3f86e8"/>
<text x="2691" y="721" font-size="15.5" textLength="36" lengthAdjust="spacingAndGlyphs" style="fill:#3a66d0">35%</text>
<rect x="2371" y="749" width="356" height="50" rx="6" fill="#4a7cf5"/>
<text x="2549" y="774.6" font-size="18" text-anchor="middle" textLength="182" lengthAdjust="spacingAndGlyphs" style="fill:#f4f8ff">Confirm Buy 0.01 Lots</text>
</g>
</svg>
</body></html>
